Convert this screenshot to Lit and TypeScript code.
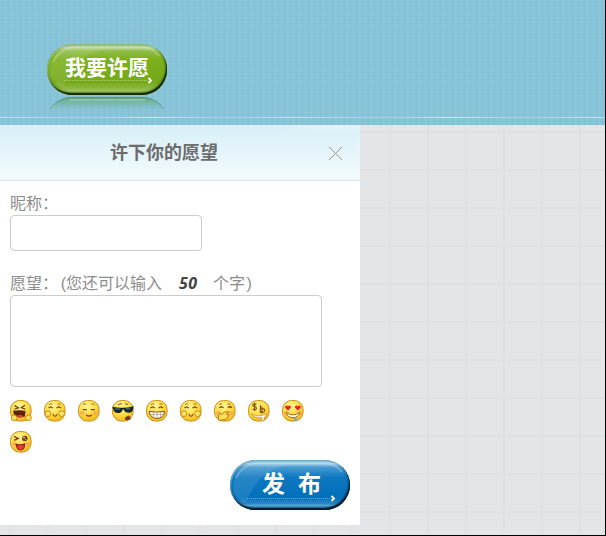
import { LitElement, html, svg, css } from "lit";
import { customElement, property } from "lit/decorators.js";

const brow = "#8a5412";
const happyEyes = svg`<path d="M4.6 8.2Q6.6 5.6 8.8 8.2M12.6 8.2Q14.8 5.6 17 8.2" fill="none" stroke="#74420c" stroke-width="1.3"/>`;
const cheeks = svg`<g fill="#f9965a" opacity=".6"><ellipse cx="4.3" cy="13" rx="2.5" ry="2"/><ellipse cx="17.4" cy="13" rx="2.5" ry="2"/></g>`;
const brows = svg`<path d="M5 4.6q1.6-1.3 3.2-.5M13.4 4.1q1.6-.8 3.2.5" fill="none" stroke="#a46a14"/>`;
const palms = svg`<g fill="#ffe36a" stroke="#c98a17"><circle cx="3.9" cy="13.6" r="2.9"/><circle cx="17.6" cy="13.6" r="2.9"/></g>`;

const faces: Record<string, unknown> = {
  cry: svg`<path d="M4.4 5.6l4 2.2-4 1.4M15 5.2l-3.6 2.4 4 1.6" fill="none" stroke="#6a3a08" stroke-width="1.2"/>
    <path d="M3 10.8q7-1.2 12.6.2l-.8 5.6q-5 1.6-10.4 0z" fill="#5d2108"/><path d="M7 16q3-2.6 6 0l-1 1.4H8z" fill="#d7442a"/>
    <g fill="#ffe15c" stroke="#c98a17"><circle cx="4.2" cy="17.8" r="2.9"/><circle cx="18.4" cy="17.8" r="2.9"/></g>`,
  hug: svg`${brows}${happyEyes}${cheeks}${palms}<path d="M8.8 14q2.2 4.6 4.4 0" fill="none" stroke="#a84d12" stroke-width="1.3"/>`,
  shy: svg`${brows}<path d="M4.8 9.6h4M12.8 9.6h4" fill="none" stroke="#74420c" stroke-width="1.3"/>${cheeks}<path d="M8 14.8q3 2.4 6 0" fill="none" stroke="#b54415" stroke-width="1.5"/>`,
  cool: svg`<path d="M6 4.6l4-1M13 3.8l3 .6" stroke=${brow}/><path d="M.2 6.8Q11 9 21.8 6.2l-.8 3.6q-1 3.2-5 2.8-3.4-.3-4.2-3.2h-1q-1 3.6-5 3.6-3.8-.2-4.4-3.6z" fill="#19272d"/>
    <path d="M3 9h5M14 8.8h4" stroke="#55808b"/><path d="M12.6 17.8l4-2.4 1.6 1.6.4 2.4-4.6 1.2z" fill="#7a3c12"/>`,
  grin: svg`${brows}${happyEyes}${cheeks}<path d="M3.4 11.4q7.4 1.4 15 0-.4 7-7.4 7-7.2 0-7.6-7z" fill="#fff" stroke="#8a5211"/><path d="M4.4 14.6h13M7.4 12v5.4M11 12v6M14.6 12v5.4" stroke="#a89473" stroke-width=".7"/>`,
  giggle: svg`${brows}<path d="M5.4 7.8q2-2 4 0M14 7.8q2-2 4 0" fill="none" stroke="#74420c" stroke-width="1.3"/>${cheeks}
    <path d="M5.2 20.8q-1.8-5.6.8-7.8l1.2 1.6q3.4-4 7.8-2.8l-2.8 2.4 2.4.4q-1 5.6-6.8 5.4z" fill="#ffdf55" stroke="#b97a12"/>`,
  money: svg`<path d="M8.4 4.4q-3.4-1-3.6.8 0 1.2 1.8 1.5 2 .3 1.9 1.7-.4 1.8-4 .7M6.6 2.6V11M12.4 5v7.4h2.2q2-.2 2-2t-2-1.8h-2.2M14 6.6v7" fill="none" stroke="#8a5211" stroke-width="1.2"/>
    <path d="M3.6 14q7 4 14.8-.2-.6 4.2-2.4 4v3h-2.4v-3.2Q6 19 3.6 14z" fill="#fff" stroke="#c18221" stroke-width=".7"/>`,
  love: svg`${cheeks}<path d="M6 10.4L3.2 7.8q-.5-2 1.4-2.2 1 0 1.4 1 .4-1 1.6-1 1.8.4 1.2 2.2zM15.8 10.4L13 7.8q-.5-2 1.4-2.2 1 0 1.4 1 .4-1 1.6-1 1.8.4 1.2 2.2z" fill="#ed1e24"/>
    <path d="M4.4 12.6q6.6 4.6 13.2 0-.8 5-6.6 5t-6.6-5z" fill="#fff" stroke="#a76618"/><path d="M13.2 17.4q2 .6 1.6 3.4h-2.8q-.4-1.6 1.2-3.4z" fill="#57aee8"/>`,
  wink: svg`<path d="M4 5.4l4.2 2L4 9.4" fill="none" stroke="#74420c" stroke-width="1.4"/><circle cx="14.8" cy="7.4" r="2.7" fill="#6b3b10"/><circle cx="14" cy="6.6" r=".8" fill="#fff"/><circle cx="15.6" cy="8.2" r=".5" fill="#fff"/>
    ${cheeks}<path d="M5.4 12.6q5 1.4 9.6-.4.8 6.6-4 7.2-5 .2-5.6-6.8z" fill="#8d1f0d"/><path d="M7.2 14.6q3.6-1 6.6-.2 0 4-3 4.4-3 0-3.6-4.2z" fill="#f03c38"/>`,
};

@customElement("face-icon")
class FaceIcon extends LitElement {
  @property() name = "hug";
  static styles = css`
    :host { display: block; width: 22px; height: 22px; }
    svg { display: block; }
  `;
  render() {
    return html`<svg width="22" height="22" viewBox="0 0 22 22">
      <defs><radialGradient id="g" cx=".42" cy=".28" r=".75">
        <stop offset="0" stop-color="#fff69a" /><stop offset=".5" stop-color="#ffe04a" /><stop offset="1" stop-color="#f3b51d" />
      </radialGradient></defs>
      <rect x=".5" y=".5" width="20.6" height="20.6" rx="9" fill="url(#g)" stroke="#c9931c" />
      ${faces[this.name]}
    </svg>`;
  }
}

@customElement("gloss-button")
class GlossButton extends LitElement {
  @property({ reflect: true }) tone = "green";
  static styles = css`
    :host { display: block; width: 120px; height: 50px; }
    :host([tone="green"]) { height: 51px; }
    .btn {
      box-sizing: border-box; width: 120px; height: 100%; padding: 0; border: 0; border-radius: 25px;
      display: grid; grid-template: 100% / 100%; overflow: hidden;
      color: #fff; font: bold 21px/47px "Liberation Sans", "Noto Sans CJK SC", sans-serif;
    }
    .art, .text { grid-area: 1 / 1; }
    .art { display: block; }
    .text { text-align: center; white-space: pre; }
    .green {
      background: linear-gradient(#8fb873, #b9d79a 7%, #8fbd48 14%, #7cb01c 30%, #74a918 75%, #8dba45 88%, #a5c967 92%, #6d9c22);
      box-shadow: inset 1px 1px 1px #8db887, inset -1px -2px 1px #162903, inset -1px -2px 3px #355809;
    }
    .blue {
      background: linear-gradient(#7db9db, #a3cfe8 7%, #4599cf 15%, #0d78c0 35%, #0070ba 75%, #2786c6 87%, #5ba8d8 91%, #0b5c94);
      box-shadow: inset 1px 1px 1px #72a9c5, inset -1px -2px 1px #021b2c, inset -1px -2px 3px #06436d;
      font-size: 23px;
    }
    .blue .text { padding-left: 3px; line-height: 48px; }
  `;
  render() {
    const y = this.tone === "green" ? 36.5 : 38.5;
    return html`<button class="btn ${this.tone}">
      <svg class="art" width="120" height="50" viewBox="0 0 120 50">
        <path d="M4 34Q-1 8 25 5H60Q28 9 16 43Q7 40 4 34Z" fill="#fff" opacity=".1" />
        <path d="M6 18Q11 6 25 3.5H96Q106 4 112 12" fill="none" stroke="#fff" stroke-width="2" opacity=".22" />
        <path d="M17 ${y}H101" stroke="#fff" stroke-dasharray="1 1" opacity=".4" />
        <path d="M101.5 ${y - 2.5}l2.5 2.5-2.5 2.5" fill="none" stroke="#fff" stroke-width="1.8" />
      </svg>
      <span class="text"><slot></slot></span>
    </button>`;
  }
}

@customElement("app-root")
class AppRoot extends LitElement {
  static styles = css`
    :host {
      display: flex; flex-direction: column; box-sizing: border-box; width: 606px; height: 536px; overflow: hidden;
      border-right: 1px solid #000; border-bottom: 1px solid #000;
      font: 16px/20px "Liberation Sans", "Noto Sans CJK SC", sans-serif; color: #8c8c8c;
    }
    .top {
      box-sizing: border-box; height: 125px; flex: none; padding: 44px 0 0 47px; display: flex; flex-direction: column;
      background:
        linear-gradient(90deg, #b9e0ea, #a5d3e1 30%, #c5e6ef 50%, #a5d3e1 75%, #c0e3ed) 0 117px / 300px 1px repeat-x,
        repeating-linear-gradient(90deg, #7fbcd200 0 2px, #7ab8cf55 2px 3px, #7fbcd200 3px 5px, #94cbdd44 5px 6px),
        repeating-linear-gradient(#8ac6da 0 2px, #85c1d6 2px 3px, #8ac6da 3px 5px, #87c3d7 5px 7px);
    }
    .reflection { display: block; margin-top: 2px; }
    .board {
      flex: 1; min-height: 0;
      background:
        linear-gradient(90deg, #dddee2b0 2px, transparent 2px) 9px 0 / 38px 38px,
        linear-gradient(#dddee2b0 2px, transparent 2px) 0 6px / 38px 38px, #e4e5e9;
    }
    .dialog { width: 360px; height: 400px; background: #fff; }
    .head {
      box-sizing: border-box; height: 56px; border-bottom: 1px solid #e2e2e4; padding: 0 17px 0 0;
      display: grid; grid-template-columns: 1fr 15px; align-items: center;
      background:
        radial-gradient(circle at 361px 23px, #eefafb66 5px, transparent 7px),
        radial-gradient(ellipse at 340px 0, #edfafc80, transparent 70px),
        linear-gradient(#d7eff7, #e5f5fa 50%, #f3fbfd);
    }
    .title { margin: 0; height: 55px; text-align: center; font: bold 18px/52px "Noto Sans CJK SC", sans-serif; color: #6c6c6c; }
    .close { display: block; margin-top: 1px; }
    .form { padding: 14px 10px 0; display: flex; flex-direction: column; }
    .label { height: 20px; display: flex; white-space: pre; font: 16px/18px "Liberation Sans", "Noto Sans CJK SC", sans-serif; }
    .paren { width: 8px; text-align: center; }
    .paren.open { text-align: right; }
    .count { box-sizing: border-box; width: 51px; padding-left: 17px; color: #444; font: italic bold 16px/16px "Noto Sans", sans-serif; letter-spacing: .5px; }
    .input, .area { display: block; box-sizing: border-box; margin: 0; padding: 4px; border: 1px solid #ccc; border-radius: 4px; background: #fff; resize: none; outline: 0; }
    .input { width: 192px; height: 36px; margin-bottom: 24px; }
    .area { width: 312px; height: 92px; }
    .faces { width: 312px; margin-top: 13px; display: flex; flex-wrap: wrap; gap: 9px 12px; }
    .submit { align-self: flex-end; margin-top: 7px; }
  `;
  render() {
    const names = ["cry", "hug", "shy", "cool", "grin", "hug", "giggle", "money", "love", "wink"];
    return html`
      <header class="top">
        <gloss-button tone="green">我要许愿</gloss-button>
        <svg class="reflection" width="120" height="13" viewBox="0 0 120 13">
          <defs><linearGradient id="r" x2="0" y2="1"><stop stop-color="#5fa673" /><stop offset="1" stop-color="#7dbdb8" stop-opacity=".3" /></linearGradient></defs>
          <path d="M3 12Q11 0 25 0H95Q109 0 117 12Z" fill="url(#r)" />
          <path d="M3 12Q11 .5 25 .5H95Q109 .5 117 12" fill="none" stroke="#438477" opacity=".5" />
          <path d="M22 3H98" stroke="#b2dccb" stroke-width="2" opacity=".4" />
        </svg>
      </header>
      <main class="board">
        <section class="dialog">
          <div class="head">
            <h2 class="title">许下你的愿望</h2>
            <svg class="close" width="15" height="15" viewBox="0 0 15 15"><path d="M1 1l13 13M14 1L1 14" stroke="#9a9590" /></svg>
          </div>
          <div class="form">
            <label class="label">昵称：</label>
            <input class="input" />
            <label class="label">愿望：<span class="paren open">(</span>您还可以输入<span class="count">50</span>个字<span class="paren">)</span></label>
            <textarea class="area"></textarea>
            <div class="faces">${names.map((n) => html`<face-icon name=${n}></face-icon>`)}</div>
            <gloss-button class="submit" tone="blue">发&nbsp; 布</gloss-button>
          </div>
        </section>
      </main>`;
  }
}
